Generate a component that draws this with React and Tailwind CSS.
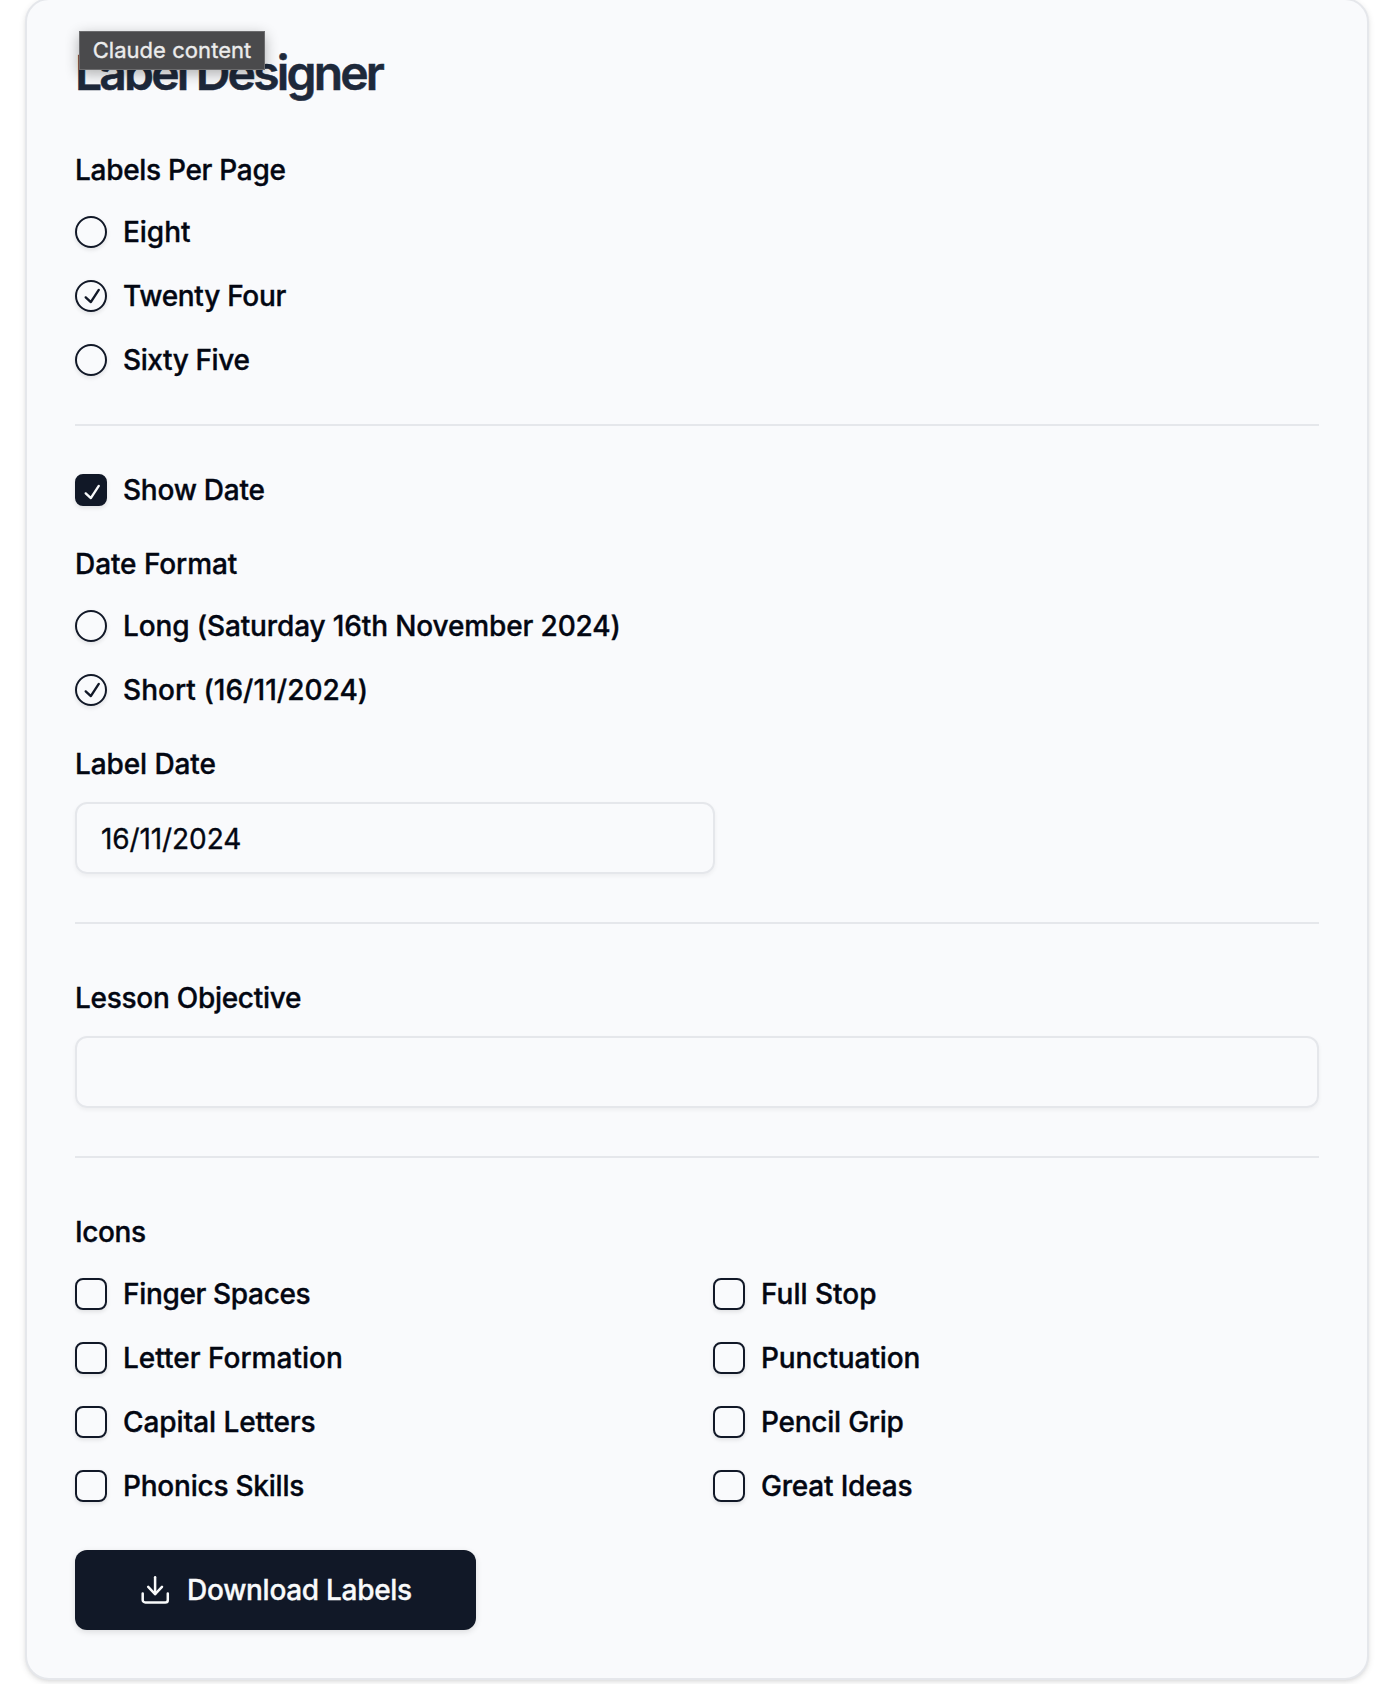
import React from "react";

const CHECK =
  "M11.4669 3.72684C11.7558 3.91574 11.8369 4.30308 11.648 4.59198L7.39799 11.092C7.29783 11.2452 7.13556 11.3467 6.95402 11.3699C6.77247 11.3931 6.58989 11.3355 6.45446 11.2124L3.70446 8.71241C3.44905 8.48022 3.43023 8.08494 3.66242 7.82953C3.89461 7.57412 4.28989 7.55529 4.5453 7.78749L6.75292 9.79441L10.6018 3.90792C10.7907 3.61902 11.178 3.53795 11.4669 3.72684Z";

function Check({ className }) {
  return (
    <svg viewBox="0 0 15 15" className={"size-7 shrink-0 " + className} fill="currentColor">
      <path d={CHECK} fillRule="evenodd" clipRule="evenodd" />
    </svg>
  );
}

function Radio({ label, checked, spacing = "" }) {
  return (
    <label className="flex h-8 items-center gap-4">
      <span className="flex size-8 shrink-0 items-center justify-center rounded-full border-2 border-[#111827] shadow-[0_2px_4px_rgba(0,0,0,0.1)]">
        {checked && <Check className="translate-x-px text-[#111827]" />}
      </span>
      <span className={"whitespace-nowrap " + spacing}>{label}</span>
    </label>
  );
}

function Box({ label, checked, spacing = "" }) {
  return (
    <label className="flex h-8 items-center gap-4">
      <span
        className={
          "flex size-8 shrink-0 items-center justify-center rounded-lg border-2 border-[#111827] shadow-[0_2px_4px_rgba(0,0,0,0.1)] " +
          (checked ? "bg-[#111827]" : "")
        }
      >
        {checked && <Check className="translate-x-px translate-y-[2px] text-[#f9fafb]" />}
      </span>
      <span className={"whitespace-nowrap " + spacing}>{label}</span>
    </label>
  );
}

function Heading({ children, className = "" }) {
  return <div className={"h-7 leading-7 whitespace-nowrap " + className}>{children}</div>;
}

function Divider() {
  return <div className="h-[2px] shrink-0 bg-[#e5e7eb]" />;
}

export default function App() {
  return (
    <div className="h-[1684px] overflow-hidden bg-white pl-[25px] font-['Inter',sans-serif] text-[28px] leading-8 font-medium text-[#030712] [-webkit-text-stroke:0.35px]">
      <main className="relative -mt-[2px] flex h-[1682px] w-[1344px] flex-col rounded-3xl border-2 border-[#e5e7eb] bg-[#f9fafc] px-12 shadow-[0_2px_6px_rgba(0,0,0,0.1),0_2px_4px_-2px_rgba(0,0,0,0.1)]">
        <h1 className="mt-12 h-12 text-[48px] leading-[50px] font-semibold tracking-[-2.82px] whitespace-nowrap text-[#1e293b] [-webkit-text-stroke:0.5px]">
          Label Designer
        </h1>
        <div className="absolute top-[31px] left-[52px] flex h-[39px] w-[186px] items-center justify-center border border-[#6b6b6d] bg-[#4a4a4c] pb-[2px] text-[22px] font-normal tracking-[0.05px] whitespace-nowrap text-[#ececec] shadow-[0_4px_14px_rgba(0,0,0,0.3)]">
          Claude content
        </div>

        <Heading className="mt-[60px] tracking-[-0.3px]">Labels Per Page</Heading>
        <div className="mt-8 flex flex-col gap-8">
          <Radio label="Eight" spacing="tracking-[-0.05px]" />
          <Radio label="Twenty Four" checked spacing="tracking-[-0.3px]" />
          <Radio label="Sixty Five" spacing="tracking-[-0.4px]" />
        </div>
        <div className="h-12" />
        <Divider />

        <div className="mt-12 flex flex-col">
          <Box label="Show Date" checked spacing="tracking-[-0.24px]" />
          <Heading className="mt-11 tracking-[-0.08px]">Date Format</Heading>
          <div className="mt-8 flex flex-col gap-8">
            <Radio label="Long (Saturday 16th November 2024)" spacing="tracking-[-0.13px]" />
            <Radio label="Short (16/11/2024)" checked spacing="tracking-[0.04px]" />
          </div>
          <Heading className="mt-11 tracking-[-0.1px]">Label Date</Heading>
          <div className="mt-6 flex h-[72px] w-[640px] items-center rounded-xl border-2 border-[#e5e7eb] px-6 pt-[2px] font-normal tracking-[-0.1px] shadow-[0_2px_4px_rgba(0,0,0,0.05)]">
            16/11/2024
          </div>
        </div>
        <div className="h-12" />
        <Divider />

        <Heading className="mt-[60px] tracking-[-0.28px]">Lesson Objective</Heading>
        <div className="mt-6 h-[72px] rounded-xl border-2 border-[#e5e7eb] shadow-[0_2px_4px_rgba(0,0,0,0.05)]" />
        <div className="h-12" />
        <Divider />

        <Heading className="mt-[60px] tracking-[-0.4px]">Icons</Heading>
        <div className="mt-8 grid grid-cols-[606px_606px] gap-8">
          <Box label="Finger Spaces" spacing="tracking-[-0.34px]" />
          <Box label="Full Stop" />
          <Box label="Letter Formation" />
          <Box label="Punctuation" spacing="tracking-[-0.1px]" />
          <Box label="Capital Letters" spacing="tracking-[-0.06px]" />
          <Box label="Pencil Grip" spacing="tracking-[-0.24px]" />
          <Box label="Phonics Skills" spacing="tracking-[-0.23px]" />
          <Box label="Great Ideas" spacing="tracking-[-0.2px]" />
        </div>

        <button className="mt-12 flex h-20 w-[401px] items-center justify-center gap-4 rounded-xl bg-[#111827] text-[#f9fafb] shadow-[0_2px_6px_rgba(0,0,0,0.12)]">
          <svg viewBox="4 6 32 32" className="size-8" fill="none" stroke="currentColor" strokeWidth="2.5" strokeLinecap="round" strokeLinejoin="round">
            <path d="M32.8 25.6v6.3a2.6 2.6 0 0 1-2.6 2.6H10.3a2.6 2.6 0 0 1-2.6-2.6v-6.3" />
            <path d="M13.2 18.9l6.9 7.2 6.9-7.2" />
            <path d="M20.1 26V9.3" />
          </svg>
          <span className="tracking-[-0.3px] whitespace-nowrap">Download Labels</span>
        </button>
      </main>
    </div>
  );
}
